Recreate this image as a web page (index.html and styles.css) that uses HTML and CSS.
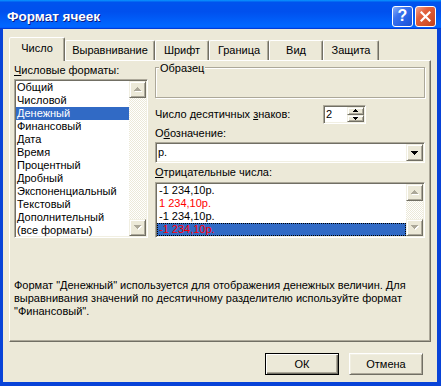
FILE: index.html
```html
<!DOCTYPE html>
<html lang="ru">
<head>
    <meta charset="UTF-8">
    <title>Формат ячеек</title>
    <link rel="stylesheet" href="styles.css">
</head>
<body>

<div class="window">
    <div class="titlebar">
        <span class="title">Формат ячеек</span>
        <div class="caption-btns">
            <span class="cap-btn help">?</span>
            <span class="cap-btn close">
                <svg width="11" height="11" viewBox="0 0 11 11"><path d="M1.5 1.5L9.5 9.5M9.5 1.5L1.5 9.5" stroke="#fff" stroke-width="2.2" stroke-linecap="square"/></svg>
            </span>
        </div>
    </div>

    <div class="client">
        <!-- tab strip -->
        <div class="tabs">
            <div class="tab active">Число</div>
            <div class="tab" style="width:90px">Выравнивание</div>
            <div class="tab" style="width:54px">Шрифт</div>
            <div class="tab" style="width:60px">Граница</div>
            <div class="tab" style="width:54px">Вид</div>
            <div class="tab" style="width:56px">Защита</div>
        </div>

        <div class="panel">
            <div class="top">
                <div class="col-left">
                    <div class="label"><u>Ч</u>исловые форматы:</div>
                    <div class="sunken listbox formats">
                        <div class="items">
                            <div class="item">Общий</div>
                            <div class="item">Числовой</div>
                            <div class="item sel">Денежный</div>
                            <div class="item">Финансовый</div>
                            <div class="item">Дата</div>
                            <div class="item">Время</div>
                            <div class="item">Процентный</div>
                            <div class="item">Дробный</div>
                            <div class="item">Экспоненциальный</div>
                            <div class="item">Текстовый</div>
                            <div class="item">Дополнительный</div>
                            <div class="item">(все форматы)</div>
                        </div>
                        <div class="vscroll">
                            <div class="raised sbtn"><svg width="8" height="5" class="arrow-off"><path d="M3 0h1v1h-1zM2 1h3v1h-3zM1 2h5v1h-5zM0 3h7v1h-7z"/></svg></div>
                            <div class="track"></div>
                            <div class="raised sbtn"><svg width="8" height="5" class="arrow-off"><path d="M0 0h7v1h-7zM1 1h5v1h-5zM2 2h3v1h-3zM3 3h1v1h-1z"/></svg></div>
                        </div>
                    </div>
                </div>

                <div class="col-right">
                    <div class="sample">
                        <span class="sample-title">Образец</span>
                    </div>

                    <div class="decimals">
                        <div class="label">Число десятичных <u>з</u>наков:</div>
                        <div class="sunken spin">
                            <div class="spin-value">2</div>
                            <div class="spin-btns">
                                <div class="raised spin-btn"><svg width="5" height="3"><path d="M2 0h1v1h-1zM1 1h3v1h-3zM0 2h5v1h-5z"/></svg></div>
                                <div class="raised spin-btn"><svg width="5" height="3"><path d="M0 0h5v1h-5zM1 1h3v1h-3zM2 2h1v1h-1z"/></svg></div>
                            </div>
                        </div>
                    </div>

                    <div class="label symbol-label">О<u>б</u>означение:</div>
                    <div class="sunken combo">
                        <div class="combo-text">р.</div>
                        <div class="raised combo-btn"><svg width="7" height="4"><path d="M0 0h7v1h-7zM1 1h5v1h-5zM2 2h3v1h-3zM3 3h1v1h-1z"/></svg></div>
                    </div>

                    <div class="label neg-label"><u>О</u>трицательные числа:</div>
                    <div class="sunken listbox negatives">
                        <div class="items">
                            <div class="item">-1 234,10р.</div>
                            <div class="item red">1 234,10р.</div>
                            <div class="item">-1 234,10р.</div>
                            <div class="item red sel focus">-1 234,10р.</div>
                        </div>
                        <div class="vscroll">
                            <div class="raised sbtn"><svg width="8" height="5" class="arrow-off"><path d="M3 0h1v1h-1zM2 1h3v1h-3zM1 2h5v1h-5zM0 3h7v1h-7z"/></svg></div>
                            <div class="track"></div>
                            <div class="raised sbtn"><svg width="8" height="5" class="arrow-off"><path d="M0 0h7v1h-7zM1 1h5v1h-5zM2 2h3v1h-3zM3 3h1v1h-1z"/></svg></div>
                        </div>
                    </div>
                </div>
            </div>

            <p class="desc">Формат "Денежный" используется для отображения денежных величин. Для<br>выравнивания значений по десятичному разделителю используйте формат<br>"Финансовый".</p>
        </div>

        <div class="buttons">
            <button class="btn default">ОК</button>
            <button class="btn">Отмена</button>
        </div>
    </div>
</div>

</body>
</html>
```

FILE: styles.css
```css
* {
    box-sizing: border-box;
}
body {
    margin: 0;
    font: 11px "Liberation Sans", Arial, sans-serif;
    color: #000;
    background: #fff;
}
.window {
    width: 441px;
    height: 386px;
    display: flex;
    flex-direction: column;
}

/* title bar */
.titlebar {
    height: 29px;
    display: flex;
    align-items: center;
    padding: 3px 5px 0 7px;
    background: linear-gradient(180deg, #0997ff, #0053ee 8%, #0050ee 40%, #0066ff 88%, #0066ff 93%, #005bff 95%, #003dd7 96%, #003dd7);
}
.title {
    flex: 1;
    color: #fff;
    font: bold 13.5px "Liberation Sans", Arial, sans-serif;
    text-shadow: 1px 1px #0a1883;
}
.caption-btns {
    display: flex;
    gap: 2px;
}
.cap-btn {
    width: 21px;
    height: 21px;
    border: 1px solid #fff;
    border-radius: 3px;
    display: flex;
    align-items: center;
    justify-content: center;
}
.help {
    background: linear-gradient(135deg, #8cb0f8 0%, #3a72ee 35%, #245fe4 70%, #1d4fd0 100%);
    color: #fff;
    font: bold 16px "Liberation Sans", Arial, sans-serif;
}
.close {
    background: linear-gradient(135deg, #f3a48e 0%, #e2603c 35%, #d4522c 70%, #c0401c 100%);
}

/* client area */
.client {
    flex: 1;
    background: #ece9d8;
    border: solid #0843d8;
    border-width: 0 4px 4px 3px;
    padding-top: 8px;
    display: flex;
    flex-direction: column;
}
.tabs {
    display: flex;
    align-items: flex-end;
    height: 23px;
    margin-left: 6px;
}
.tab {
    height: 20px;
    padding-top: 3px;
    line-height: 13px;
    text-align: center;
    white-space: nowrap;
    border: 1px solid;
    border-bottom: 0;
    border-color: #fff #716f64 transparent #fff;
    border-radius: 2px 2px 0 0;
    box-shadow: inset -1px 0 #aca899;
}
.tab.active {
    width: 56px;
    height: 24px;
    padding-top: 4px;
    margin-bottom: -1px;
    position: relative;
    background: #ece9d8;
}
.panel {
    margin: 0 6px;
    height: 282px;
    border: 1px solid;
    border-color: #fff #716f64 #716f64 #fff;
    box-shadow: inset -1px -1px #aca899;
    padding: 3px 5px 0 4px;
}
.top {
    display: grid;
    grid-template-columns: 134px 270px;
    column-gap: 7px;
}
.label {
    height: 13px;
    line-height: 13px;
    white-space: nowrap;
}

/* sunken / raised 3d edges */
.sunken {
    background: #fff;
    border: 1px solid;
    border-color: #aca899 #fff #fff #aca899;
    padding: 1px;
    box-shadow: inset 1px 1px #716f64, inset -1px -1px #f1efe2;
}
.raised {
    background: #ece9d8;
    border: 1px solid;
    border-color: #f1efe2 #716f64 #716f64 #f1efe2;
    box-shadow: inset 1px 1px #fff, inset -1px -1px #aca899;
    display: flex;
    align-items: center;
    justify-content: center;
}

/* list boxes */
.listbox {
    display: flex;
}
.formats {
    margin-top: 2px;
    height: 159px;
}
.items {
    flex: 1;
    overflow: hidden;
}
.item {
    height: 13px;
    line-height: 13px;
    padding-left: 1px;
    white-space: nowrap;
}
.item.sel {
    background: #316ac5;
    color: #fff;
}
.item.red {
    color: #f00;
}
.item.focus {
    outline: 1px dotted #000;
    outline-offset: -1px;
}
.vscroll {
    width: 17px;
    display: flex;
    flex-direction: column;
    background: repeating-conic-gradient(#fff 0 25%, #ece9d8 0 50%) 0 0 / 2px 2px;
}
.sbtn {
    height: 17px;
}
.track {
    flex: 1;
}
.arrow-off {
    fill: #aca899;
    filter: drop-shadow(1px 1px 0 #fff);
}

/* right column */
.sample {
    margin-top: 3px;
    height: 31px;
    border: 1px solid #aca899;
    box-shadow: inset 1px 1px #fff, 1px 1px #fff;
}
.sample-title {
    display: block;
    width: fit-content;
    margin: -6px 0 0 3px;
    padding: 0 1px;
    line-height: 13px;
    background: #ece9d8;
}
.decimals {
    display: flex;
    align-items: center;
    margin-top: 7px;
    height: 19px;
}
.decimals .label {
    width: 168px;
}
.spin {
    width: 43px;
    height: 19px;
    display: flex;
}
.spin-value {
    flex: 1;
    line-height: 15px;
    padding-left: 1px;
}
.spin-btns {
    width: 17px;
    display: flex;
    flex-direction: column;
}
.spin-btn {
    flex: 1;
}
.symbol-label {
    margin-top: 3px;
}
.combo {
    margin-top: 2px;
    height: 21px;
    display: flex;
}
.combo-text {
    flex: 1;
    line-height: 17px;
    padding-left: 1px;
}
.combo-btn {
    width: 17px;
}
.neg-label {
    margin-top: 3px;
}
.negatives {
    margin-top: 3px;
    height: 56px;
}
.negatives .item {
    padding-left: 2px;
}

.desc {
    margin: 41px 0 0;
    line-height: 13px;
    white-space: nowrap;
}

/* dialog buttons */
.buttons {
    display: flex;
    justify-content: flex-end;
    gap: 10px;
    padding-right: 14px;
    margin-top: 11px;
}
.btn {
    width: 74px;
    height: 22px;
    font: inherit;
    color: #000;
    background: #ece9d8;
    border: 1px solid;
    border-color: #fff #716f64 #716f64 #fff;
    box-shadow: inset 1px 1px #f1efe2, inset -1px -1px #aca899;
    padding: 0;
}
.btn.default {
    border-color: #000;
    box-shadow: inset 1px 1px #fff, inset -1px -1px #716f64, inset -2px -2px #aca899;
}
```
